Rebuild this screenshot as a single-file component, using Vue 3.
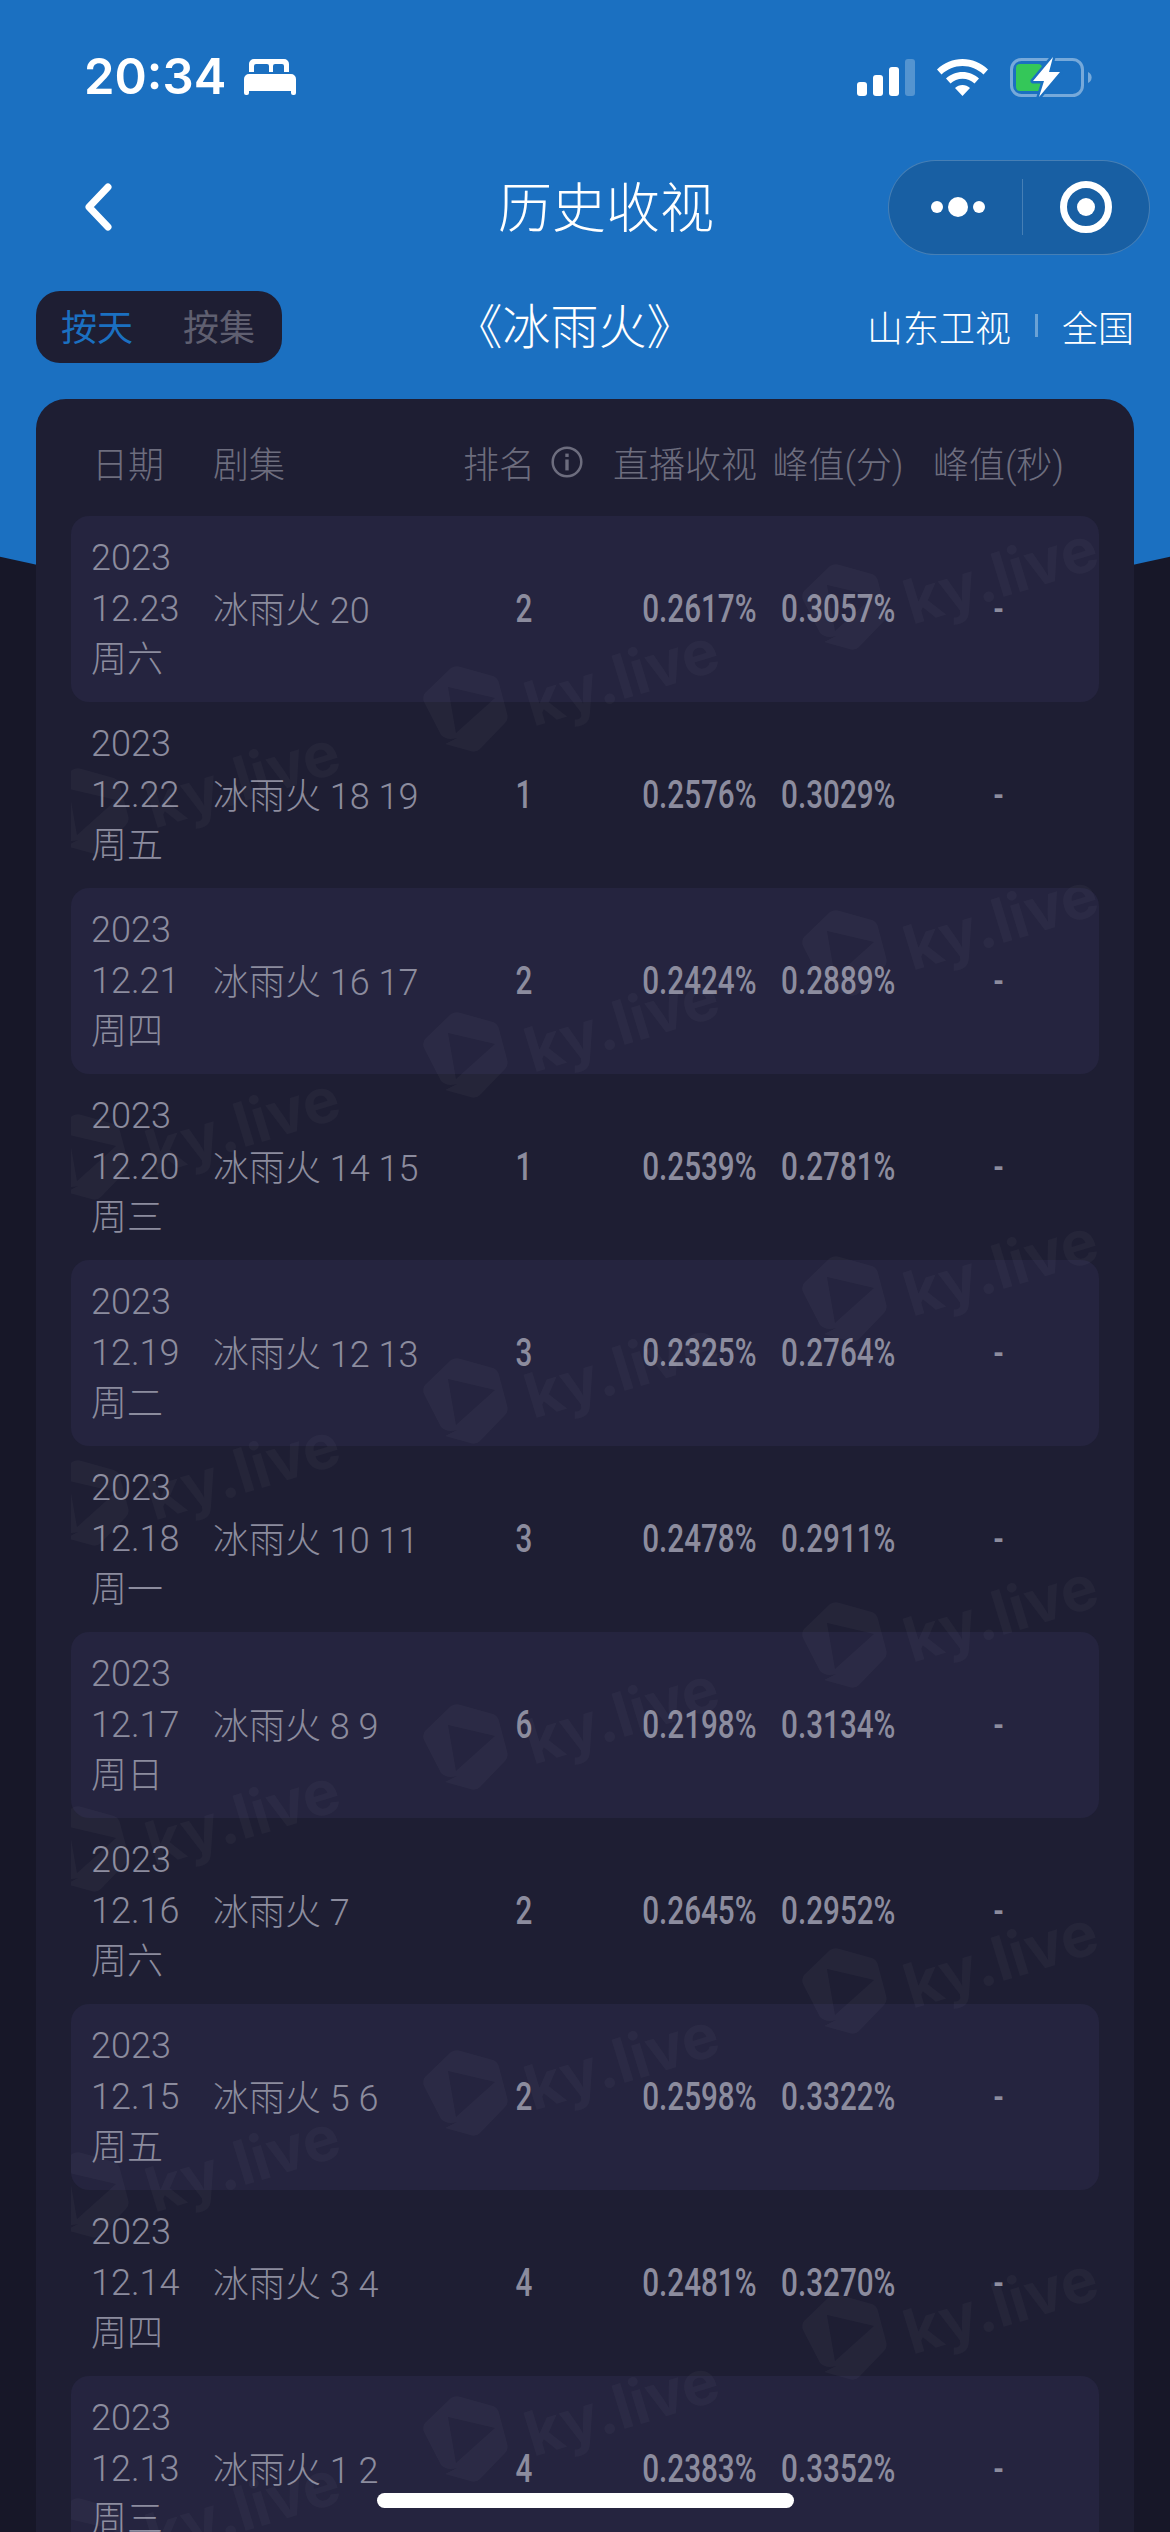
<script setup>
const rows = [
  { date: '12.23', week: '周六', ep: '冰雨火 20', rank: 2, live: '0.2617%', peak: '0.3057%' },
  { date: '12.22', week: '周五', ep: '冰雨火 18 19', rank: 1, live: '0.2576%', peak: '0.3029%' },
  { date: '12.21', week: '周四', ep: '冰雨火 16 17', rank: 2, live: '0.2424%', peak: '0.2889%' },
  { date: '12.20', week: '周三', ep: '冰雨火 14 15', rank: 1, live: '0.2539%', peak: '0.2781%' },
  { date: '12.19', week: '周二', ep: '冰雨火 12 13', rank: 3, live: '0.2325%', peak: '0.2764%' },
  { date: '12.18', week: '周一', ep: '冰雨火 10 11', rank: 3, live: '0.2478%', peak: '0.2911%' },
  { date: '12.17', week: '周日', ep: '冰雨火 8 9', rank: 6, live: '0.2198%', peak: '0.3134%' },
  { date: '12.16', week: '周六', ep: '冰雨火 7', rank: 2, live: '0.2645%', peak: '0.2952%' },
  { date: '12.15', week: '周五', ep: '冰雨火 5 6', rank: 2, live: '0.2598%', peak: '0.3322%' },
  { date: '12.14', week: '周四', ep: '冰雨火 3 4', rank: 4, live: '0.2481%', peak: '0.3270%' },
  { date: '12.13', week: '周三', ep: '冰雨火 1 2', rank: 4, live: '0.2383%', peak: '0.3352%' },
]

// watermark lattice, coordinates relative to the rows box
const marks = []
for (let col = -1; col <= 1; col++) {
  for (let i = -1; i < 7; i++) {
    marks.push({ id: col + '_' + i, x: 352 + col * 379, y: 149 - col * 102 + i * 346 })
  }
}
</script>

<template>
  <div class="page">
    <div class="hero"></div>

    <div class="status">
      <div class="clock">
        <span>20:34</span>
        <svg width="52" height="36" viewBox="0 0 52 36">
          <path fill="#fff" fill-rule="evenodd" d="M10 0h30a5 5 0 0 1 5 5v8H5V5a5 5 0 0 1 5-5zM12 5a2 2 0 0 0-2 2v6h15V7a2 2 0 0 0-2-2zM31 5a2 2 0 0 0-2 2v6h11V7a2 2 0 0 0-2-2z" />
          <path fill="#fff" d="M5 15h42a5 5 0 0 1 5 5v14a2 2 0 0 1-2 2h-1a2 2 0 0 1-2-2v-2H5v2a2 2 0 0 1-2 2H2a2 2 0 0 1-2-2V20a5 5 0 0 1 5-5z" />
        </svg>
      </div>
      <div class="sys">
        <svg width="58" height="37" viewBox="0 0 58 37">
          <rect x="0" y="23" width="10" height="14" rx="3" fill="#fff" />
          <rect x="16" y="16" width="10" height="21" rx="3" fill="#fff" />
          <rect x="32" y="8" width="10" height="29" rx="3" fill="#fff" />
          <rect x="48" y="0" width="10" height="37" rx="3" fill="#fff" fill-opacity=".25" />
        </svg>
        <svg width="51" height="37" viewBox="0 0 51 37">
          <path fill="#fff" d="M25.500 0C35 0 44 3.800 51 10.500L46.500 15.500C40.800 10.200 33.400 7 25.500 7S10.200 10.200 4.500 15.500L0 10.500C7 3.800 16 0 25.500 0z" />
          <path fill="#fff" d="M25.500 13C31.800 13 37.600 15.400 42 19.600L37.500 24.500C34.300 21.500 30 19.800 25.500 19.800S16.700 21.500 13.500 24.500L9 19.600C13.400 15.400 19.200 13 25.500 13z" />
          <path fill="#fff" d="M25.500 26C28.300 26 30.900 27 33 28.900L25.500 37L18 28.900C20.100 27 22.700 26 25.500 26z" />
        </svg>
        <svg width="82" height="41" viewBox="0 0 82 41">
          <rect x="1.500" y="2.500" width="71" height="36" rx="10" fill="none" stroke="#fff" stroke-opacity=".4" stroke-width="3" />
          <path d="M78 15a6 6 0 0 1 0 11z" fill="#fff" fill-opacity=".4" />
          <rect x="6" y="7" width="26" height="27" rx="4" fill="#34c759" />
          <path d="M43 0 23 24h11l-5 16 21-25H39z" fill="#fff" stroke="#1b70c1" stroke-width="5" stroke-linejoin="round" paint-order="stroke" />
        </svg>
      </div>
    </div>

    <div class="nav">
      <svg class="back" width="27" height="48" viewBox="0 0 27 48">
        <path d="M23 4 4 24l19 20" fill="none" stroke="#fff" stroke-width="7" stroke-linecap="round" stroke-linejoin="round" />
      </svg>
      <div class="title">历史收视</div>
      <div class="capsule">
        <div class="capsule-part dots">
          <span class="dot"></span>
          <span class="dot big"></span>
          <span class="dot"></span>
        </div>
        <div class="capsule-line"></div>
        <div class="capsule-part">
          <span class="ring"><span class="ring-core"></span></span>
        </div>
      </div>
    </div>

    <div class="tools">
      <div class="toggle">
        <span class="on">按天</span>
        <span>按集</span>
      </div>
      <div class="drama">《冰雨火》</div>
      <div class="region">
        <span>山东卫视</span>
        <i></i>
        <span>全国</span>
      </div>
    </div>

    <div class="card">
      <div class="grid head">
        <div class="pl">日期</div>
        <div>剧集</div>
        <div class="rank-head">
          排名
          <svg width="38" height="38" viewBox="0 0 38 38">
            <circle cx="19" cy="19" r="17" fill="none" stroke="#6d6d7e" stroke-width="3" />
            <rect x="17" y="16" width="4" height="13" fill="#6d6d7e" />
            <rect x="17" y="9" width="4" height="4" fill="#6d6d7e" />
          </svg>
        </div>
        <div class="right">直播收视</div>
        <div class="mid">峰值(分)</div>
        <div class="mid">峰值(秒)</div>
      </div>

      <div class="rows">
        <div v-for="(r, i) in rows" :key="r.date" class="grid row" :class="{ odd: i % 2 === 0 }">
          <div class="date">2023<br />{{ r.date }}<br />{{ r.week }}</div>
          <div class="ep">{{ r.ep }}</div>
          <div class="num mid"><span>{{ r.rank }}</span></div>
          <div class="num right"><span>{{ r.live }}</span></div>
          <div class="num mid"><span>{{ r.peak }}</span></div>
          <div class="num mid"><span>-</span></div>
        </div>

        <svg class="marks" width="1028" height="2046" viewBox="0 0 1028 2046">
          <g v-for="m in marks" :key="m.id" :transform="`translate(${m.x} ${m.y})`" fill="#fff" fill-opacity=".032">
            <path fill-rule="evenodd" d="M28 3Q32 0 38 2L70 11Q75 13 76 18L84 48Q86 54 82 58L57 84Q53 88 47 86L22 79L34 73Q24 76 18 70L1 37Q-1 32 2 28ZM25 22 33 68 72 33Z" />
            <text x="110" y="62" transform="rotate(-17 110 62)" class="mark-text">ky.live</text>
          </g>
        </svg>
      </div>
    </div>

    <div class="home"></div>
  </div>
</template>

<style scoped>
.page {
  position: relative;
  width: 1170px;
  height: 2532px;
  overflow: hidden;
  background: #171728;
  font-family: Roboto, "Noto Sans CJK SC", sans-serif;
  color: #fff;
}

.hero {
  position: absolute;
  left: 0;
  top: 0;
  width: 1170px;
  height: 700px;
  background: #1b70c1;
  clip-path: circle(2660px at 585px -2038px);
}

.status {
  position: relative;
  height: 132px;
  padding: 0 78px 0 84px;
  display: flex;
  justify-content: space-between;
  align-items: flex-end;
  box-sizing: border-box;
}

.clock {
  display: flex;
  align-items: center;
  gap: 18px;
  margin-bottom: 30px;
  font-family: Inter, sans-serif;
  font-size: 49px;
  font-weight: 600;
  line-height: 50px;
}

.sys {
  display: flex;
  align-items: center;
  gap: 22px;
  margin-bottom: 34px;
}

.nav {
  position: relative;
  height: 150px;
  display: flex;
  align-items: center;
  padding: 0 20px 0 85px;
}

.back {
  flex: none;
}

.title {
  flex: 1;
  padding: 0 0 6px 212px;
  text-align: center;
  font-size: 54px;
  font-weight: 300;
}

.capsule {
  flex: none;
  width: 262px;
  height: 95px;
  box-sizing: border-box;
  border: 1px solid rgba(255, 255, 255, 0.2);
  border-radius: 48px;
  background: #185fa3;
  display: flex;
  align-items: center;
}

.capsule-part {
  display: flex;
  align-items: center;
  justify-content: center;
  gap: 5px;
  flex: 1;
}

.capsule-part.dots {
  padding-left: 6px;
}

.capsule-line {
  width: 1px;
  height: 56px;
  background: rgba(255, 255, 255, 0.2);
}

.dot {
  width: 12px;
  height: 12px;
  border-radius: 50%;
  background: #fff;
}

.dot.big {
  width: 20px;
  height: 20px;
}

.ring {
  width: 52px;
  height: 52px;
  box-sizing: border-box;
  border: 7px solid #fff;
  border-radius: 50%;
  display: flex;
  align-items: center;
  justify-content: center;
}

.ring-core {
  width: 18px;
  height: 18px;
  border-radius: 50%;
  background: #fff;
}

.tools {
  position: relative;
  height: 72px;
  margin: 9px 36px 0;
  display: flex;
  align-items: center;
}

.toggle {
  flex: none;
  width: 246px;
  height: 72px;
  box-sizing: border-box;
  padding: 0 0 5px 25px;
  border-radius: 24px;
  background: #1e1e33;
  display: flex;
  align-items: center;
  gap: 50px;
  font-size: 36px;
  color: #5f5f70;
}

.toggle .on {
  color: #1b70c1;
}

.drama {
  flex: 1;
  padding-bottom: 8px;
  text-align: center;
  font-size: 48px;
  font-weight: 300;
}

.region {
  flex: none;
  display: flex;
  align-items: center;
  gap: 24px;
  padding-bottom: 3px;
  font-size: 36px;
  font-weight: 300;
}

.region i {
  width: 3px;
  height: 23px;
  background: rgba(255, 255, 255, 0.35);
}

.card {
  position: relative;
  height: 2200px;
  margin: 36px 36px 0;
  border-radius: 30px 30px 0 0;
  background: #1e1e33;
  overflow: hidden;
}

.grid {
  display: grid;
  grid-template-columns: 122px 252px 118px 182px 146px 175px;
  padding-left: 20px;
  align-items: center;
  font-size: 36px;
  font-weight: 300;
}

.head {
  height: 117px;
  box-sizing: border-box;
  padding: 8px 0 0 55px;
  color: #6d6d7e;
  white-space: nowrap;
}

.pl {
  padding-left: 1px;
}

.rank-head {
  display: flex;
  align-items: center;
  gap: 16px;
  margin-left: -2px;
}

.right {
  text-align: right;
  padding-right: 8px;
}

.mid {
  text-align: center;
}

.rows {
  position: relative;
  margin: 0 35px;
}

.row {
  height: 186px;
  border-radius: 18px;
  color: #8c8c9e;
  white-space: nowrap;
}

.row.odd {
  background: #25243f;
}

.date {
  line-height: 51px;
}

.ep {
  padding-bottom: 5px;
}

/* no condensed family is installed, so the figures get narrowed here */
.num {
  font-weight: 500;
  font-size: 38px;
}

.num span {
  display: inline-block;
  transform: scaleX(0.78);
  transform-origin: center;
}

.num.right span {
  transform-origin: right center;
}

.marks {
  position: absolute;
  left: 0;
  top: 0;
  pointer-events: none;
}

.mark-text {
  font-family: Inter, sans-serif;
  font-size: 62px;
  font-weight: 700;
}

.home {
  position: absolute;
  left: 377px;
  top: 2493px;
  width: 417px;
  height: 15px;
  border-radius: 8px;
  background: #fff;
}
</style>
